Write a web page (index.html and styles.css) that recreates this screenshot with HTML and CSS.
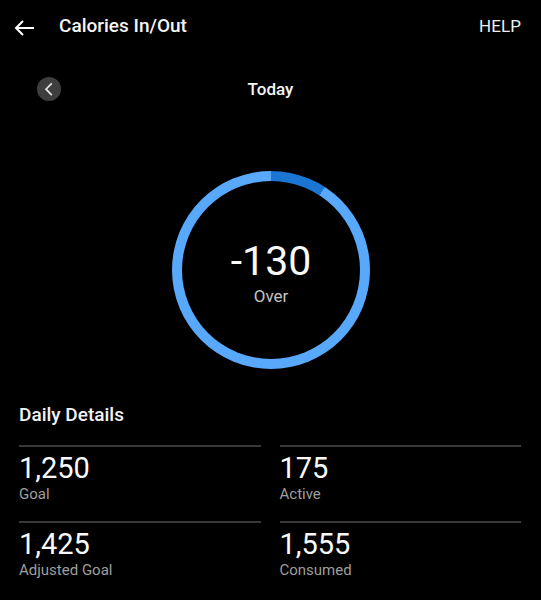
FILE: index.html
```html
<!DOCTYPE html>
<html lang="en">
<head>
<meta charset="utf-8">
<title>Calories In/Out</title>
<link rel="stylesheet" href="styles.css">
</head>
<body>
<div class="app">
  <header class="topbar">
    <svg class="back" width="20" height="16" viewBox="0 0 20 16" aria-hidden="true">
      <path d="M20 8H2.2M9 1L2 8L9 15" fill="none" stroke="#ffffff" stroke-width="2"/>
    </svg>
    <h1 class="title">Calories In/Out</h1>
    <span class="help">HELP</span>
  </header>

  <div class="daterow">
    <button class="prev" aria-label="Previous day">
      <svg width="24" height="24" viewBox="0 0 24 24" aria-hidden="true">
        <path d="M14.8 6.3L9 12.2L14.8 18.1" fill="none" stroke="#e6e6e6" stroke-width="1.7"/>
      </svg>
    </button>
    <div class="today">Today</div>
    <div></div>
  </div>

  <div class="ringwrap">
    <div class="ring">
      <div class="ring-inner">
        <div class="big">-130</div>
        <div class="sub">Over</div>
      </div>
    </div>
  </div>

  <h2 class="section">Daily Details</h2>
  <div class="grid">
    <div class="cell"><div class="val">1,250</div><div class="lbl">Goal</div></div>
    <div class="cell"><div class="val">175</div><div class="lbl">Active</div></div>
    <div class="cell"><div class="val">1,425</div><div class="lbl">Adjusted Goal</div></div>
    <div class="cell"><div class="val">1,555</div><div class="lbl">Consumed</div></div>
  </div>
</div>
</body>
</html>
```

FILE: styles.css
```css
* { box-sizing: border-box; }
html, body {
  margin: 0;
  padding: 0;
  background: #000;
  color: #fff;
  font-family: Roboto, "Noto Sans", "Liberation Sans", sans-serif;
}
.app {
  width: 541px;
  height: 600px;
  overflow: hidden;
}
.topbar {
  height: 51px;
  display: flex;
  align-items: center;
  padding: 0 20px 0 14px;
}
.back {
  flex: none;
  margin-top: 4px;
}
.title {
  margin: 0 0 0 25px;
  font-size: 19px;
  line-height: 24px;
  font-weight: 500;
  color: #f5f5f5;
  flex: 1;
}
.help {
  font-size: 17px;
  line-height: 24px;
  color: #f0f0f0;
  letter-spacing: 0.1px;
}
.daterow {
  margin-top: 26px;
  height: 24px;
  display: grid;
  grid-template-columns: 1fr auto 1fr;
  align-items: center;
  padding: 0 37px;
}
.prev {
  width: 24px;
  height: 24px;
  border: none;
  padding: 0;
  border-radius: 50%;
  background: #3e3e3e;
  display: flex;
  align-items: center;
  justify-content: center;
}
.today {
  font-size: 17px;
  line-height: 24px;
  font-weight: 500;
  color: #f5f5f5;
}
.ringwrap {
  margin-top: 70px;
  display: flex;
  justify-content: center;
  padding-left: 1px;
}
.ring {
  width: 198px;
  height: 198px;
  border-radius: 50%;
  padding: 10px;
  background: conic-gradient(#1b76d3 0deg 33deg, #58a8fb 33deg 360deg);
}
.ring-inner {
  width: 100%;
  height: 100%;
  border-radius: 50%;
  background: #000;
  display: flex;
  flex-direction: column;
  align-items: center;
  justify-content: center;
  padding-top: 4px;
}
.big {
  font-size: 41px;
  line-height: 44px;
  color: #fafafa;
}
.sub {
  margin-top: 3px;
  font-size: 17px;
  line-height: 20px;
  color: #c4c4c4;
}
.section {
  margin: 34px 0 0 0;
  padding-left: 19px;
  font-size: 19px;
  line-height: 24px;
  font-weight: 500;
  color: #f2f2f2;
}
.grid {
  margin-top: 18px;
  display: grid;
  grid-template-columns: 1fr 1fr;
  column-gap: 19px;
  row-gap: 18px;
  padding: 0 20px 0 19px;
}
.cell {
  border-top: 2px solid #383838;
  padding-top: 5px;
}
.val {
  font-size: 29px;
  line-height: 32px;
  color: #fafafa;
}
.lbl {
  margin-top: 1px;
  font-size: 15px;
  line-height: 18px;
  color: #9e9e9e;
}
```
